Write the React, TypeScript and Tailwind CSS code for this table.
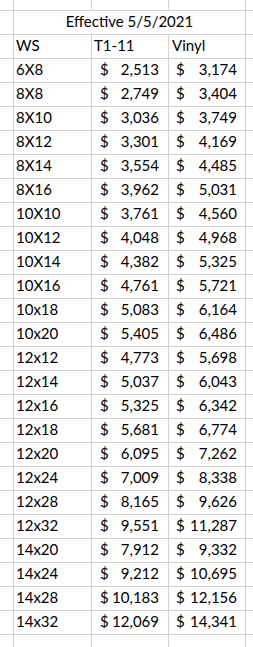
import React from 'react';

interface PriceRow {
    size: string;
    t111: string;
    vinyl: string;
}

const rows: PriceRow[] = [
    { size: '6X8', t111: '2,513', vinyl: '3,174' },
    { size: '8X8', t111: '2,749', vinyl: '3,404' },
    { size: '8X10', t111: '3,036', vinyl: '3,749' },
    { size: '8X12', t111: '3,301', vinyl: '4,169' },
    { size: '8X14', t111: '3,554', vinyl: '4,485' },
    { size: '8X16', t111: '3,962', vinyl: '5,031' },
    { size: '10X10', t111: '3,761', vinyl: '4,560' },
    { size: '10X12', t111: '4,048', vinyl: '4,968' },
    { size: '10X14', t111: '4,382', vinyl: '5,325' },
    { size: '10X16', t111: '4,761', vinyl: '5,721' },
    { size: '10x18', t111: '5,083', vinyl: '6,164' },
    { size: '10x20', t111: '5,405', vinyl: '6,486' },
    { size: '12x12', t111: '4,773', vinyl: '5,698' },
    { size: '12x14', t111: '5,037', vinyl: '6,043' },
    { size: '12x16', t111: '5,325', vinyl: '6,342' },
    { size: '12x18', t111: '5,681', vinyl: '6,774' },
    { size: '12x20', t111: '6,095', vinyl: '7,262' },
    { size: '12x24', t111: '7,009', vinyl: '8,338' },
    { size: '12x28', t111: '8,165', vinyl: '9,626' },
    { size: '12x32', t111: '9,551', vinyl: '11,287' },
    { size: '14x20', t111: '7,912', vinyl: '9,332' },
    { size: '14x24', t111: '9,212', vinyl: '10,695' },
    { size: '14x28', t111: '10,183', vinyl: '12,156' },
    { size: '14x32', t111: '12,069', vinyl: '14,341' },
];

// excel-ish cell: text sits on the bottom of the cell
const cell = 'bg-white flex items-end pb-[5px] leading-[15px]';

const App: React.FC = () => {
    return (
        <div
            className="w-[253px] h-[647px] overflow-hidden bg-white text-[15px] text-black"
            style={{ fontFamily: 'Lato, "Open Sans", sans-serif' }}
        >
            <div className="grid h-full grid-cols-[13px_77px_76px_76px_1fr] grid-rows-[10px_repeat(26,23px)_1fr] gap-px bg-[#d4d4d4]">
                {/* top partial row */}
                <div className="bg-white" />
                <div className="bg-white" />
                <div className="bg-white" />
                <div className="bg-white" />
                <div className="bg-white" />

                {/* merged title */}
                <div className="bg-white" />
                <div className={`${cell} col-span-3 justify-center`}>Effective 5/5/2021</div>
                <div className="bg-white" />

                {/* header */}
                <div className="bg-white" />
                <div className={`${cell} pl-[2px]`}>WS</div>
                <div className={`${cell} pl-[2px]`}>T1-11</div>
                <div className={`${cell} pl-[3px]`}>Vinyl</div>
                <div className="bg-white" />

                {rows.map(r => (
                    <React.Fragment key={r.size}>
                        <div className="bg-white" />
                        <div className={`${cell} pl-[2px]`}>{r.size}</div>
                        <div className={`${cell} justify-between pl-[8px] pr-[9px]`}>
                            <span>$</span>
                            <span>{r.t111}</span>
                        </div>
                        <div className={`${cell} justify-between pl-[7px] pr-[8px]`}>
                            <span>$</span>
                            <span>{r.vinyl}</span>
                        </div>
                        <div className="bg-white" />
                    </React.Fragment>
                ))}

                {/* bottom partial row */}
                <div className="bg-white" />
                <div className="bg-white" />
                <div className="bg-white" />
                <div className="bg-white" />
                <div className="bg-white" />
            </div>
        </div>
    );
};

export default App;
